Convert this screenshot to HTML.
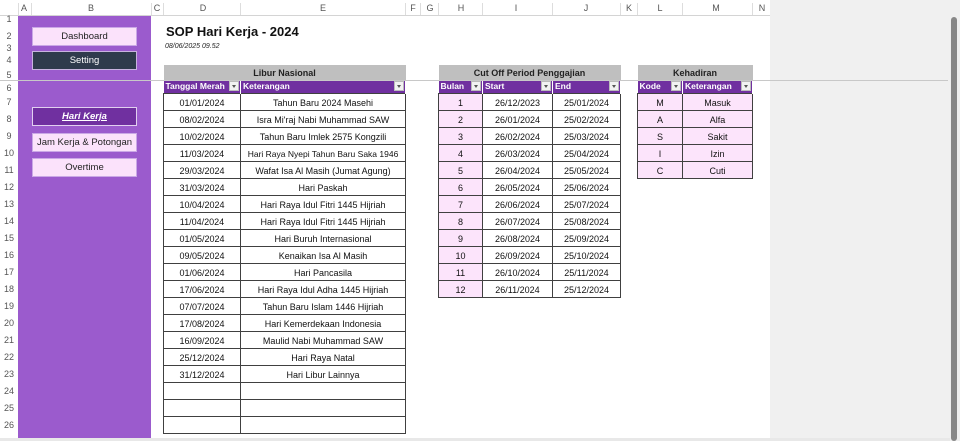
<!DOCTYPE html>
<html><head><meta charset="utf-8"><style>
*{margin:0;padding:0;box-sizing:border-box}
body{width:960px;height:441px;overflow:hidden;background:#fff;font-family:"Liberation Sans",sans-serif;position:relative}
.abs{position:absolute}
.colhdr{position:absolute;top:0;left:0;width:770px;height:16px;background:#fff;border-bottom:1px solid #d4d4d4}
.colhdr span{position:absolute;top:3px;font-size:9px;color:#555;transform:translateX(-50%)}
.colhdr i{position:absolute;top:3px;width:1px;height:12px;background:#ddd}
.rownum{position:absolute;left:0;width:18px;font-size:9px;color:#555;text-align:center}
.gray{position:absolute;left:770px;top:0;width:190px;height:441px;background:#f0f0f0}
.side{position:absolute;left:18px;top:16px;width:133px;height:422px;background:#9b5bcd}
.btn{position:absolute;left:32px;width:105px;height:19px;font-size:9.5px;text-align:center;line-height:17px;border:1px solid #caa8e6}
table{position:absolute;border-collapse:collapse;font-size:9px;table-layout:fixed}
td{height:17px;border:1px solid #404040;text-align:center;color:#111;padding:1px 0 0;white-space:nowrap;overflow:hidden}
tr.t td{height:15px;background:#bfbfbf;font-weight:bold;border:none;color:#222}
tr.h td{height:13px;background:#7030a0;color:#fff;font-weight:bold;text-align:left;padding:0 0 0 2px;border:none;border-right:1px solid #fff;position:relative;font-size:8.5px;line-height:13px}
tr.h td b{position:absolute;right:1px;top:1px;width:10px;height:10px;background:#f2f2f2;border:1px solid #bbb}
tr.h td b:after{content:"";position:absolute;left:2px;top:3px;border-left:2.5px solid transparent;border-right:2.5px solid transparent;border-top:3px solid #555}
.p{background:#fce4fb}
</style></head><body>
<div class="gray"></div>
<div class="abs" style="left:951px;top:17px;width:6px;height:424px;background:#888;border-radius:3px"></div>
<div class="colhdr">
<span style="left:24px">A</span><span style="left:91px">B</span><span style="left:157px">C</span><span style="left:203px">D</span><span style="left:323px">E</span><span style="left:413px">F</span><span style="left:430px">G</span><span style="left:461px">H</span><span style="left:516px">I</span><span style="left:586px">J</span><span style="left:629px">K</span><span style="left:660px">L</span><span style="left:716px">M</span><span style="left:762px">N</span>
<i style="left:18px"></i><i style="left:31px"></i><i style="left:151px"></i><i style="left:163px"></i><i style="left:240px"></i><i style="left:405px"></i><i style="left:420px"></i><i style="left:438px"></i><i style="left:482px"></i><i style="left:552px"></i><i style="left:620px"></i><i style="left:637px"></i><i style="left:682px"></i><i style="left:752px"></i>
</div>
<div class="abs" style="left:0;top:16px;width:18px;height:422px;background:#fff"></div>
<div class="rownum" style="top:14px">1</div>
<div class="rownum" style="top:31px">2</div>
<div class="rownum" style="top:43px">3</div>
<div class="rownum" style="top:55px">4</div>
<div class="rownum" style="top:70px">5</div>
<div class="rownum" style="top:83px">6</div>
<div class="rownum" style="top:97px">7</div>
<div class="rownum" style="top:114px">8</div>
<div class="rownum" style="top:131px">9</div>
<div class="rownum" style="top:148px">10</div>
<div class="rownum" style="top:165px">11</div>
<div class="rownum" style="top:182px">12</div>
<div class="rownum" style="top:199px">13</div>
<div class="rownum" style="top:216px">14</div>
<div class="rownum" style="top:233px">15</div>
<div class="rownum" style="top:250px">16</div>
<div class="rownum" style="top:267px">17</div>
<div class="rownum" style="top:284px">18</div>
<div class="rownum" style="top:301px">19</div>
<div class="rownum" style="top:318px">20</div>
<div class="rownum" style="top:335px">21</div>
<div class="rownum" style="top:352px">22</div>
<div class="rownum" style="top:369px">23</div>
<div class="rownum" style="top:386px">24</div>
<div class="rownum" style="top:403px">25</div>
<div class="rownum" style="top:420px">26</div>
<div class="side"></div>
<div class="btn" style="top:27px;background:#fbe2fb;color:#222">Dashboard</div>
<div class="btn" style="top:51px;background:#2f3b4c;color:#fff;border:1.5px solid #c9b3e0">Setting</div>
<div class="btn" style="top:107px;background:#7030a0;color:#fff;border:1.5px solid #e2d0f0;font-weight:bold;font-style:italic;text-decoration:underline">Hari Kerja</div>
<div class="btn" style="top:133px;background:#fbe2fb;color:#222">Jam Kerja &amp; Potongan</div>
<div class="btn" style="top:158px;background:#fbe2fb;color:#222">Overtime</div>
<div class="abs" style="left:166px;top:24px;font-size:13px;font-weight:bold;color:#111">SOP Hari Kerja - 2024</div>
<div class="abs" style="left:165px;top:43px;font-size:7px;font-style:italic;color:#222">08/06/2025 09.52</div>

<table style="left:163px;top:65px;width:242px">
<colgroup><col style="width:77px"><col style="width:165px"></colgroup>
<tr class="t"><td colspan="2">Libur Nasional</td></tr>
<tr class="h"><td>Tanggal Merah<b></b></td><td>Keterangan<b></b></td></tr>
<tr><td>01/01/2024</td><td>Tahun Baru 2024 Masehi</td></tr>
<tr><td>08/02/2024</td><td>Isra Mi'raj Nabi Muhammad SAW</td></tr>
<tr><td>10/02/2024</td><td>Tahun Baru Imlek 2575 Kongzili</td></tr>
<tr><td>11/03/2024</td><td style="font-size:8.5px">Hari Raya Nyepi Tahun Baru Saka 1946</td></tr>
<tr><td>29/03/2024</td><td>Wafat Isa Al Masih (Jumat Agung)</td></tr>
<tr><td>31/03/2024</td><td>Hari Paskah</td></tr>
<tr><td>10/04/2024</td><td>Hari Raya Idul Fitri 1445 Hijriah</td></tr>
<tr><td>11/04/2024</td><td>Hari Raya Idul Fitri 1445 Hijriah</td></tr>
<tr><td>01/05/2024</td><td>Hari Buruh Internasional</td></tr>
<tr><td>09/05/2024</td><td>Kenaikan Isa Al Masih</td></tr>
<tr><td>01/06/2024</td><td>Hari Pancasila</td></tr>
<tr><td>17/06/2024</td><td>Hari Raya Idul Adha 1445 Hijriah</td></tr>
<tr><td>07/07/2024</td><td>Tahun Baru Islam 1446 Hijriah</td></tr>
<tr><td>17/08/2024</td><td>Hari Kemerdekaan Indonesia</td></tr>
<tr><td>16/09/2024</td><td>Maulid Nabi Muhammad SAW</td></tr>
<tr><td>25/12/2024</td><td>Hari Raya Natal</td></tr>
<tr><td>31/12/2024</td><td>Hari Libur Lainnya</td></tr>
<tr><td></td><td></td></tr>
<tr><td></td><td></td></tr>
<tr><td></td><td></td></tr>
</table>

<table style="left:438px;top:65px;width:182px">
<colgroup><col style="width:44px"><col style="width:70px"><col style="width:68px"></colgroup>
<tr class="t"><td colspan="3">Cut Off Period Penggajian</td></tr>
<tr class="h"><td>Bulan<b></b></td><td>Start<b></b></td><td>End<b></b></td></tr>
<tr><td class="p">1</td><td>26/12/2023</td><td>25/01/2024</td></tr>
<tr><td class="p">2</td><td>26/01/2024</td><td>25/02/2024</td></tr>
<tr><td class="p">3</td><td>26/02/2024</td><td>25/03/2024</td></tr>
<tr><td class="p">4</td><td>26/03/2024</td><td>25/04/2024</td></tr>
<tr><td class="p">5</td><td>26/04/2024</td><td>25/05/2024</td></tr>
<tr><td class="p">6</td><td>26/05/2024</td><td>25/06/2024</td></tr>
<tr><td class="p">7</td><td>26/06/2024</td><td>25/07/2024</td></tr>
<tr><td class="p">8</td><td>26/07/2024</td><td>25/08/2024</td></tr>
<tr><td class="p">9</td><td>26/08/2024</td><td>25/09/2024</td></tr>
<tr><td class="p">10</td><td>26/09/2024</td><td>25/10/2024</td></tr>
<tr><td class="p">11</td><td>26/10/2024</td><td>25/11/2024</td></tr>
<tr><td class="p">12</td><td>26/11/2024</td><td>25/12/2024</td></tr>
</table>

<table style="left:637px;top:65px;width:115px">
<colgroup><col style="width:45px"><col style="width:70px"></colgroup>
<tr class="t"><td colspan="2">Kehadiran</td></tr>
<tr class="h"><td>Kode<b></b></td><td>Keterangan<b></b></td></tr>
<tr><td class="p">M</td><td class="p">Masuk</td></tr>
<tr><td class="p">A</td><td class="p">Alfa</td></tr>
<tr><td class="p">S</td><td class="p">Sakit</td></tr>
<tr><td class="p">I</td><td class="p">Izin</td></tr>
<tr><td class="p">C</td><td class="p">Cuti</td></tr>
</table>
<div class="abs" style="left:0;top:80px;width:948px;height:1px;background:#c8c8c8"></div>
<div class="abs" style="left:0;top:438px;width:950px;height:3px;background:#e8e8e8"></div>
</body></html>
